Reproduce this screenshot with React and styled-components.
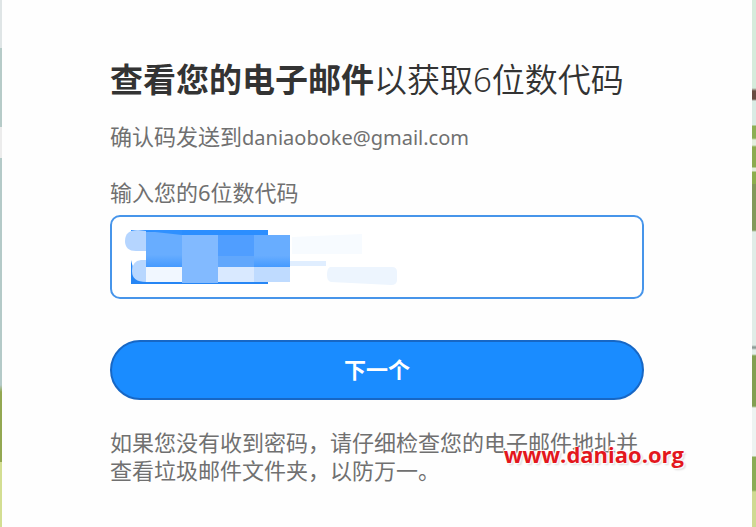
import React from "react";
import styled, { createGlobalStyle } from "styled-components";

const GlobalStyle = createGlobalStyle`
  *, *::before, *::after { box-sizing: border-box; }
  body {
    margin: 0;
    font-family: "Noto Sans", "Noto Sans CJK SC", sans-serif;
    color: #707070;
  }
`;

const Scenery = styled.div`
  min-height: 100vh;
  display: flex;
  padding: 0 4px 0 2px;
  background-color: #e3efea;
  background-image:
    linear-gradient(
      #dfe5e6 0 48px, #b6cbc8 48px 127px, #ececec 127px 158px,
      #b4cac8 158px 385px, #93a851 392px 462px, #d3de92 462px
    ),
    linear-gradient(
      #d5ebdb 0 88px, #694c42 91px 99px, #d9ebe4 101px 125px,
      #8caf54 126px 138px, #e2eedd 140px 145px, #8cab50 147px 167px,
      #e2eddc 168px 171px, #8cae4e 172px 184px, #82995b 184px 230px,
      #e0ece7 232px 345px, #8e9c96 347px 348px, #e3efea 350px 354px,
      #82a052 356px 406px, #edf3f1 408px 456px, #8aac56 457px 490px,
      #cfda92 492px
    );
  background-position: left top, right top;
  background-size: 2px 100%, 4px 100%;
  background-repeat: no-repeat;
`;

const Card = styled.main`
  flex: 1;
  background: #fefefe;
  padding: 58px 108px 40px;
`;

const Title = styled.h1`
  margin: 0;
  font-size: 33px;
  line-height: 44px;
  font-weight: 350;
  color: #333333;
  white-space: nowrap;

  strong { font-weight: 700; }
`;

const Text = styled.p`
  margin: 0;
  font-size: 22px;
  line-height: 28px;
`;

const SentTo = styled(Text)`
  margin-top: 20px;
`;

const Address = styled.span`
  font-size: 20px;
`;

const Form = styled.form`
  display: flex;
  flex-direction: column;
  margin-top: 26px;
`;

const Label = styled.label`
  font-size: 22px;
  line-height: 28px;
`;

const Field = styled.div`
  position: relative;
  margin-top: 9px;
`;

const CodeInput = styled.input`
  display: block;
  width: 100%;
  height: 84px;
  padding: 0 20px;
  border: 2px solid #4795ea;
  border-radius: 10px;
  background: #ffffff;
  color: #333333;
  font: inherit;
  font-size: 44px;
  outline: none;
`;

const Redaction = styled.svg`
  position: absolute;
  left: 14px;
  top: 14px;
  width: 280px;
  height: 58px;
  pointer-events: none;
`;

const NextButton = styled.button`
  height: 60px;
  margin-top: 41px;
  padding: 0 24px 4px;
  border: 2px solid #1767c5;
  border-radius: 30px;
  background: #1a8cff;
  color: #ffffff;
  font: inherit;
  font-size: 22px;
  font-weight: 700;
  cursor: pointer;
`;

const Note = styled.div`
  position: relative;
  margin-top: 28px;
`;

const Watermark = styled.span`
  position: absolute;
  right: -40px;
  top: 12px;
  font-family: "Open Sans", sans-serif;
  font-size: 22px;
  line-height: 28px;
  font-weight: 700;
  color: #e3171d;
  text-shadow: 0 0 2px #ffffff, 1px 1px 1px #ffffff, -1px -1px 1px #ffffff, 2px 2px 2px #d8d8d8;
`;

function HiddenCode() {
  return (
    <Redaction viewBox="0 0 280 58" aria-hidden="true">
      <defs>
        <linearGradient id="shade" x1="0" y1="0" x2="0" y2="1">
          <stop offset="0" stopColor="#68adff" />
          <stop offset="0.65" stopColor="#68adff" />
          <stop offset="1" stopColor="#459aff" />
        </linearGradient>
      </defs>
      <path d="M7 1H144V8H30L18 2H7Z" fill="#2b8eff" />
      <path d="M7 31V55H144V50H12Z" fill="#2686f5" />
      <path d="M22 2L14 1Q1 1 1 12Q1 22 12 22H22Z" fill="#b5d5ff" />
      <path d="M22 31H17Q8 32 8 42Q8 53 22 53Z" fill="#b8d7ff" />
      <rect x="22" y="3" width="36" height="35" fill="url(#shade)" />
      <path d="M22 2L58 6V1H22Z" fill="#2f90ff" />
      <rect x="58" y="6" width="36" height="48" fill="#82baff" />
      <rect x="94" y="6" width="36" height="32" fill="#509eff" />
      <rect x="94" y="27" width="36" height="11" fill="#61a7fc" />
      <rect x="130" y="6" width="36" height="32" fill="url(#shade)" />
      <rect x="22" y="38" width="36" height="15" fill="#f1f7ff" />
      <rect x="94" y="38" width="36" height="15" fill="#d9e9ff" />
      <rect x="130" y="38" width="36" height="15" fill="#bfdbff" />
      <path d="M168 8L238 5V25H168Z" fill="#f7fbff" />
      <rect x="166" y="32" width="36" height="5" fill="#e0eeff" />
      <path d="M206 38H268Q273 38 273 43V51Q273 56 267 56L207 53Q203 52 203 46Q203 39 206 38Z" fill="#edf5fe" />
    </Redaction>
  );
}

export default function App() {
  return (
    <>
      <GlobalStyle />
      <Scenery>
        <Card>
          <Title><strong>查看您的电子邮件</strong>以获取6位数代码</Title>
          <SentTo>确认码发送到<Address>daniaoboke@gmail.com</Address></SentTo>
          <Form onSubmit={(event) => event.preventDefault()}>
            <Label htmlFor="code">输入您的6位数代码</Label>
            <Field>
              <CodeInput id="code" inputMode="numeric" maxLength={6} autoComplete="one-time-code" />
              <HiddenCode />
            </Field>
            <NextButton type="submit">下一个</NextButton>
          </Form>
          <Note>
            <Text>如果您没有收到密码，请仔细检查您的电子邮件地址并查看垃圾邮件文件夹，以防万一。</Text>
            <Watermark>www.daniao.org</Watermark>
          </Note>
        </Card>
      </Scenery>
    </>
  );
}
